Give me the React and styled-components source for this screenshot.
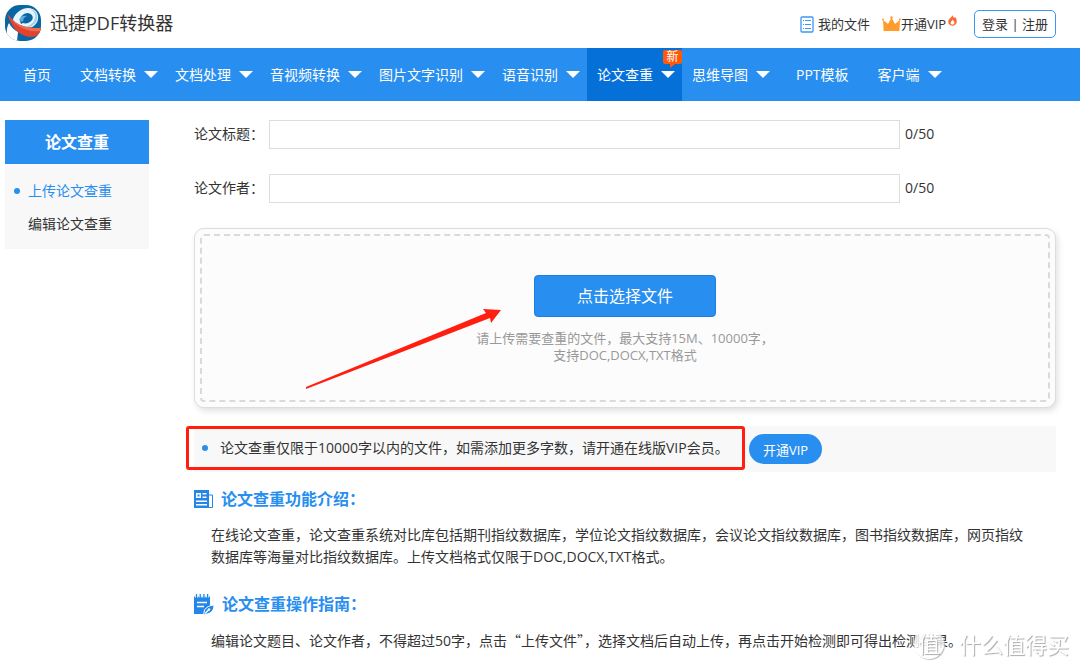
import { useState } from 'react';
import styled, { createGlobalStyle } from 'styled-components';

const navItems = [
  { id: 1, title: '首页' },
  { id: 2, title: '文档转换', menu: true },
  { id: 3, title: '文档处理', menu: true },
  { id: 4, title: '音视频转换', menu: true },
  { id: 5, title: '图片文字识别', menu: true },
  { id: 6, title: '语音识别', menu: true },
  { id: 7, title: '论文查重', menu: true, badge: '新' },
  { id: 8, title: '思维导图', menu: true },
  { id: 9, title: 'PPT模板' },
  { id: 10, title: '客户端', menu: true },
];

const sideItems = ['上传论文查重', '编辑论文查重'];

const Logo = () => (
  <svg width="36" height="36" viewBox="0 0 36 36" aria-hidden="true">
    <defs>
      <clipPath id="logoShape">
        <rect width="36" height="36" rx="15" />
      </clipPath>
    </defs>
    <g clipPath="url(#logoShape)">
      <rect width="36" height="36" fill="#0a65a3" />
      <path d="M8 14C11 7 17 3 23 3c7 0 11 5 10 11-1 7-8 10-14 9L9 18z" fill="#e6f4fc" />
      <path d="M25 4c6 1 8 6 7 10-1 6-7 9-13 8 6-1 10-4 11-9 1-4-1-7-5-9z" fill="#9fd3f0" />
      <path d="M15 16c0-5 4-8 8-8 4 1 6 4 4 7-2 3-6 4-9 3l-2 1z" fill="#0a65a3" />
      <path d="M14 15c1-3 4-5 8-4-3 1-4 3-4 6z" fill="#5fb0de" />
      <path d="M4 18c2 4 5 7 9 9l-1 9H4C1 31 1 23 4 18z" fill="#fff" />
      <path d="M2 8c5 8 13 16 34 15v4c-3 3-6 5-11 5C14 31 6 22 2 8z" fill="#e2432d" />
      <path d="M2 8c5 8 13 16 34 15v3C19 28 8 19 2 8z" fill="#f06a50" />
    </g>
  </svg>
);

const FileIcon = () => (
  <svg width="14" height="17" viewBox="0 0 14 17" fill="none" stroke="#3d97f2" aria-hidden="true">
    <rect x="1" y="1" width="12" height="15" rx="1" strokeWidth="1.3" />
    <path d="M3 4.5h1M5 4.5h6M3 8.5h1M5 8.5h6M3 12.5h1M5 12.5h6" />
  </svg>
);

const CrownIcon = () => (
  <svg width="19" height="16" viewBox="0 0 19 16" fill="#ff9c2b" aria-hidden="true">
    <path d="M1 4l5 4 3.500-6.500L13 8l5-4-.6 11H1.600z" />
    <circle cx="1" cy="3.500" r="1" />
    <circle cx="9.500" cy="1.500" r="1.200" />
    <circle cx="18" cy="3.500" r="1" />
  </svg>
);

const FlameIcon = () => (
  <svg width="9" height="11" viewBox="0 0 9 11" aria-hidden="true">
    <path d="M4.500 0c.3 1.600 1 2.200 1.800 3 .4-.3.500-.7.500-1.200C8.200 3 9 5 8.700 7 8.400 9.500 6.500 10.800 4.500 10.800S.5 9.500.2 7.300C0 5.500 1 4.200 2 3.200 3 2.300 4.300 1.500 4.500 0z" fill="#fb6a35" />
    <path d="M4.600 4.500c.2 1.200 2 1.800 1.800 3.500-.2 1-1 1.600-1.900 1.600S2.700 9 2.600 8c-.1-1.600 1.800-2 2-3.500z" fill="#fff" />
  </svg>
);

const ArticleIcon = () => (
  <svg width="19" height="18" viewBox="0 0 19 18" aria-hidden="true">
    <path d="M0 0h15v18H0z" fill="#2486e8" />
    <path d="M15 5h3.500v12.500H15" fill="none" stroke="#2486e8" />
    <path d="M2 3h5v5H2zM8.500 3h4v1.500h-4zM8.500 6.500h4V8h-4zM2 10.500h11V12H2zM2 14h11v1.500H2z" fill="#fff" />
    <path d="M3.500 4.500h2v2h-2z" fill="#2486e8" />
  </svg>
);

const GuideIcon = () => (
  <svg width="20" height="21" viewBox="0 0 20 21" aria-hidden="true">
    <path d="M0 2.500h16V12l-6 8H0z" fill="#2486e8" />
    <path d="M2.500 0v3.500M6.200 0v3.500M9.900 0v3.500M13.600 0v3.500" stroke="#fff" strokeWidth="3" />
    <path d="M2.500 0v4M6.200 0v4M9.900 0v4M13.600 0v4" stroke="#2486e8" strokeWidth="1.300" />
    <path d="M3 8.500h10M3 12.500h7" stroke="#fff" strokeWidth="1.400" />
    <path d="M20 11c0 4-1.500 7-5 8.500L9.500 21l1-5c2-3 5-4.500 9.500-5z" fill="#2486e8" stroke="#fff" />
    <path d="M11 19.500l4-4" stroke="#fff" strokeWidth="1.400" />
    <circle cx="15" cy="15.500" r="1.200" fill="#fff" />
  </svg>
);

const App = () => {
  const [title, setTitle] = useState('')
  const [author, setAuthor] = useState('')
  return (<>
    <GlobalStyle />
    <Header>
      <Brand href="#">
        <Logo />
        <SiteName>迅捷PDF转换器</SiteName>
      </Brand>
      <UserLinks>
        <FileLink href="#files"><FileIcon />我的文件</FileLink>
        <VipLink href="#vip"><CrownIcon />开通VIP<Flame><FlameIcon /></Flame></VipLink>
        <LoginButton type="button">登录 | 注册</LoginButton>
      </UserLinks>
    </Header>
    <Nav>
      {
        navItems.map(item => (
          <NavLink key={item.id} href="#" $menu={item.menu} $active={!!item.badge}>
            {item.title}
            {item.menu && <Caret />}
            {item.badge && <Badge>{item.badge}</Badge>}
          </NavLink>
        ))
      }
    </Nav>
    <Page>
      <Sidebar>
        <SideTitle>论文查重</SideTitle>
        <SideList>
          {sideItems.map((item, i) => (
            <SideLink key={item} href="#" $active={i === 0}>{item}</SideLink>
          ))}
        </SideList>
      </Sidebar>
      <Main>
        <Field>
          <label htmlFor="paper-title">论文标题：</label>
          <TextInput id="paper-title" maxLength={50} value={title} onChange={e => setTitle(e.target.value)} />
          <span>{title.length}/50</span>
        </Field>
        <Field>
          <label htmlFor="paper-author">论文作者：</label>
          <TextInput id="paper-author" maxLength={50} value={author} onChange={e => setAuthor(e.target.value)} />
          <span>{author.length}/50</span>
        </Field>
        <Upload>
          <DropZone>
            <PickButton type="button">点击选择文件</PickButton>
            <Hint>
              请上传需要查重的文件，最大支持15M、10000字，<br />
              支持DOC,DOCX,TXT格式
            </Hint>
          </DropZone>
          <Arrow width="200" height="84" viewBox="0 0 200 84" aria-hidden="true">
            <path d="M1 80L181 6l-3-4 18 1-10 13-1-5L1 82z" fill="#ff1e10" />
          </Arrow>
        </Upload>
        <Notice>
          <NoticeText>论文查重仅限于10000字以内的文件，如需添加更多字数，请开通在线版VIP会员。</NoticeText>
          <VipButton type="button">开通VIP</VipButton>
        </Notice>
        <Section>
          <SectionTitle><ArticleIcon />论文查重功能介绍：</SectionTitle>
          <Text>
            在线论文查重，论文查重系统对比库包括期刊指纹数据库，学位论文指纹数据库，会议论文指纹数据库，图书指纹数据库，网页指纹<br />
            数据库等海量对比指纹数据库。上传文档格式仅限于DOC,DOCX,TXT格式。
          </Text>
        </Section>
        <Section>
          <SectionTitle><GuideIcon />论文查重操作指南：</SectionTitle>
          <Text>
            编辑论文题目、论文作者，不得超过50字，点击<Quoted>“上传文件”</Quoted>，选择文档后自动上传，再点击开始检测即可得出检测结果。
          </Text>
        </Section>
      </Main>
    </Page>
    <Watermark>
      <WatermarkSeal>值</WatermarkSeal>
      什么值得买
    </Watermark>
  </>);
}

const GlobalStyle = createGlobalStyle`
  * {
    box-sizing: border-box;
  }
  body {
    margin: 0;
    background: #fff;
    color: #333;
    font: 14px/22px "Open Sans", "Noto Sans CJK SC", sans-serif;
  }
  a {
    color: inherit;
    text-decoration: none;
  }
  button, input {
    font-family: inherit;
    color: inherit;
  }
  button {
    cursor: pointer;
  }
  svg {
    flex: none;
  }
`
const Header = styled.header`
  display: flex;
  align-items: center;
  justify-content: space-between;
  height: 48px;
  padding: 0 24px 0 5px;
`
const Brand = styled.a`
  display: flex;
  align-items: center;
  gap: 9px;
  padding-bottom: 3px;
`
const SiteName = styled.span`
  font-size: 18px;
`
const UserLinks = styled.div`
  display: flex;
  align-items: center;
  font-size: 13px;
`
const FileLink = styled.a`
  display: flex;
  align-items: center;
  gap: 4px;
  margin-right: 12px;
`
const VipLink = styled.a`
  display: flex;
  align-items: center;
  margin-right: 17px;
`
const Flame = styled.span`
  display: flex;
  padding: 0 0 8px 2px;
`
const LoginButton = styled.button`
  height: 28px;
  padding: 0 7px;
  border: 1px solid #3d97f2;
  border-radius: 5px;
  background: #fff;
  font-size: 13px;
  line-height: 24px;
`
const Nav = styled.nav`
  display: flex;
  height: 53px;
  padding-left: 4px;
  background: #288eef;
  color: #fff;
`
const NavLink = styled.a`
  position: relative;
  display: flex;
  align-items: center;
  gap: 8px;
  padding: ${p => p.$menu ? '0 7px 0 10px' : '0 19px'};
  background: ${p => p.$active ? '#0570d8' : 'transparent'};
  white-space: nowrap;
`
const Caret = styled.i`
  border: 7px solid transparent;
  border-top-color: #fff;
  border-bottom-width: 0;
`
const Badge = styled.span`
  position: absolute;
  top: 2px;
  right: 0;
  width: 19px;
  border-radius: 2px;
  background: #ff5a0a;
  font-size: 12px;
  line-height: 14px;
  text-align: center;
  &::after {
    content: '';
    position: absolute;
    top: 14px;
    left: 7px;
    border-top: 4px solid #ff5a0a;
    border-right: 5px solid transparent;
  }
`
const Page = styled.div`
  display: flex;
  align-items: flex-start;
  gap: 45px;
  padding: 19px 24px 0 5px;
`
const Sidebar = styled.aside`
  flex: none;
  width: 144px;
  background: #f8f8f8;
`
const SideTitle = styled.h2`
  margin: 0;
  background: #288eef;
  color: #fff;
  font-size: 16px;
  line-height: 44px;
  text-align: center;
`
const SideList = styled.div`
  padding: 10px 0 9px;
`
const SideLink = styled.a`
  display: flex;
  align-items: center;
  gap: 8px;
  padding-left: 9px;
  line-height: 33px;
  color: ${p => p.$active ? '#288eef' : '#333'};
  &::before {
    content: '';
    width: 6px;
    height: 6px;
    border-radius: 50%;
    background: ${p => p.$active ? '#288eef' : 'transparent'};
  }
`
const Main = styled.main`
  flex: 1;
  min-width: 0;
`
const Field = styled.div`
  display: flex;
  align-items: center;
  gap: 5px;
  margin-bottom: 25px;
  padding-right: 119px;
  line-height: 20px;
  label {
    width: 70px;
    padding-bottom: 2px;
  }
  span {
    width: 32px;
    padding-bottom: 2px;
  }
`
const TextInput = styled.input`
  flex: 1;
  min-width: 0;
  height: 29px;
  padding: 0 8px;
  border: 1px solid #ddd;
  font-size: 14px;
`
const Upload = styled.div`
  position: relative;
  padding: 5px;
  border: 1px solid #ddd;
  border-radius: 10px;
  background: #fcfcfc;
  box-shadow: 2px 3px 6px rgba(0, 0, 0, 0.12);
`
const DropZone = styled.div`
  display: flex;
  flex-direction: column;
  align-items: center;
  padding: 39px 0 36px;
  border: 2px dashed #dadada;
  border-radius: 4px;
`
const PickButton = styled.button`
  width: 182px;
  height: 42px;
  border: 1px solid #1c80e2;
  border-radius: 4px;
  background: #288eef;
  color: #fff;
  font-size: 16px;
  line-height: 36px;
`
const Hint = styled.p`
  margin: 13px 0 0;
  color: #999;
  font-size: 13px;
  line-height: 17px;
  text-align: center;
`
const Arrow = styled.svg`
  position: absolute;
  top: 78px;
  left: 110px;
  pointer-events: none;
`
const Notice = styled.div`
  display: flex;
  align-items: center;
  gap: 10px;
  height: 46px;
  margin-top: 18px;
  background: #f8f8f8;
`
const NoticeText = styled.div`
  position: relative;
  display: flex;
  align-items: center;
  gap: 12px;
  width: 545px;
  padding: 0 0 2px 8px;
  &::before {
    content: '';
    width: 6px;
    height: 6px;
    border-radius: 50%;
    background: #288eef;
  }
  &::after {
    content: '';
    position: absolute;
    inset: -11px -6px -9px -8px;
    border: 3px solid #ff1e10;
    border-radius: 3px;
  }
`
const VipButton = styled.button`
  width: 73px;
  height: 30px;
  border: 0;
  border-radius: 15px;
  background: #288eef;
  color: #fff;
  font-size: 13px;
`
const Section = styled.section`
  margin-top: 15px;
  & + & {
    margin-top: 24px;
  }
`
const SectionTitle = styled.h3`
  display: flex;
  align-items: center;
  gap: 8px;
  height: 24px;
  margin: 0 0 13px;
  color: #288eef;
  font-size: 16px;
`
const Text = styled.p`
  margin: 0;
  padding-left: 17px;
`
const Quoted = styled.span`
  font-family: "Noto Sans CJK SC", sans-serif;
`
const Watermark = styled.div`
  position: fixed;
  right: 11px;
  bottom: 9px;
  display: flex;
  align-items: center;
  gap: 15px;
  color: #fff;
  font-size: 22px;
  line-height: 32px;
  text-shadow: 1px 1px 1px #aaa;
  pointer-events: none;
`
const WatermarkSeal = styled.span`
  width: 30px;
  height: 30px;
  border-radius: 50%;
  background: rgba(255, 255, 255, 0.8);
  box-shadow: 1px 1px 1px #bbb;
  line-height: 28px;
  text-align: center;
`

export default App
